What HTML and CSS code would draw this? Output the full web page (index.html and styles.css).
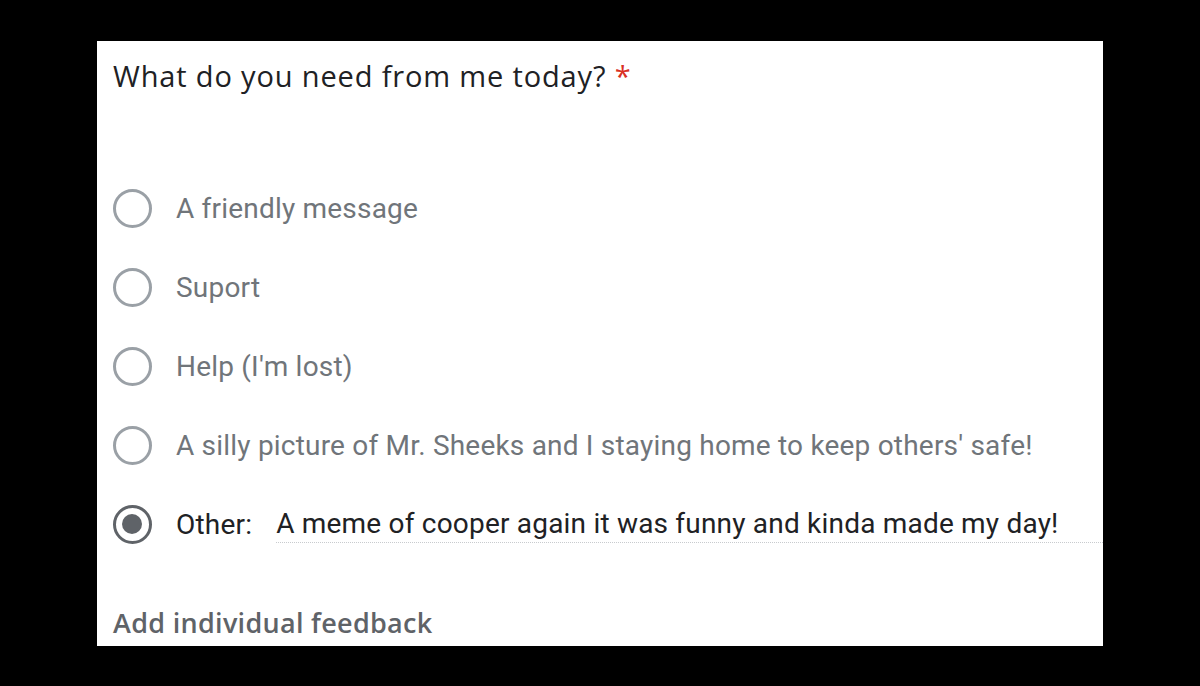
FILE: index.html
```html
<!DOCTYPE html>
<html>
<head>
<meta charset="utf-8">
<link rel="stylesheet" href="styles.css">
</head>
<body>
<div class="card">
  <div class="title">What do you need from me today? <span class="req">*</span></div>
  <div class="options">
    <div class="opt"><span class="radio"></span><span class="label">A friendly message</span></div>
    <div class="opt"><span class="radio"></span><span class="label">Suport</span></div>
    <div class="opt"><span class="radio"></span><span class="label">Help (I'm lost)</span></div>
    <div class="opt"><span class="radio"></span><span class="label">A silly picture of Mr. Sheeks and I staying home to keep others' safe!</span></div>
    <div class="opt other"><span class="radio checked"></span><span class="label dark">Other:</span><span class="input">A meme of cooper again it was funny and kinda made my day!</span></div>
  </div>
  <div class="feedback">Add individual feedback</div>
</div>
</body>
</html>
```
FILE: styles.css
```css
html, body {
  margin: 0;
  padding: 0;
  background: #000;
  width: 1200px;
  height: 686px;
  overflow: hidden;
}
.card {
  margin: 41px 0 0 97px;
  width: 1006px;
  height: 605px;
  background: #fff;
  box-sizing: border-box;
  padding-left: 16px;
  display: flex;
  flex-direction: column;
  overflow: hidden;
}
.title {
  font-family: "Open Sans", sans-serif;
  font-size: 29px;
  color: #202124;
  margin-top: 17px;
  line-height: 36px;
  letter-spacing: 0.85px;
  flex: none;
}
.req { color: #d93025; }
.options {
  display: flex;
  flex-direction: column;
  margin-top: 75px;
  flex: none;
}
.opt {
  display: flex;
  align-items: center;
  height: 79px;
}
.radio {
  width: 39px;
  height: 39px;
  box-sizing: border-box;
  border: 3.5px solid #9aa0a6;
  border-radius: 50%;
  flex: none;
  position: relative;
}
.radio.checked { border-color: #5f6368; }
.radio.checked::after {
  content: "";
  position: absolute;
  left: 6px; top: 6px;
  width: 20px; height: 20px;
  border-radius: 50%;
  background: #5f6368;
}
.label {
  font-family: Roboto, sans-serif;
  font-size: 28px;
  color: #70757a;
  margin-left: 24px;
  letter-spacing: 0.2px;
}
.label.dark { color: #202124; }
.input {
  font-family: Roboto, sans-serif;
  font-size: 28px;
  color: #202124;
  margin-left: 24px;
  letter-spacing: 0.2px;
  flex: 1;
  align-self: stretch;
  display: flex;
  align-items: center;
  border-bottom: 1.5px dotted #c8cbce;
  margin-bottom: 21px;
  padding-top: 19px;
  box-sizing: border-box;
}
.feedback {
  font-family: "Open Sans", sans-serif;
  font-size: 27px;
  font-weight: 600;
  color: #5f6368;
  margin-top: 40px;
  letter-spacing: 0.3px;
  flex: none;
}
```
